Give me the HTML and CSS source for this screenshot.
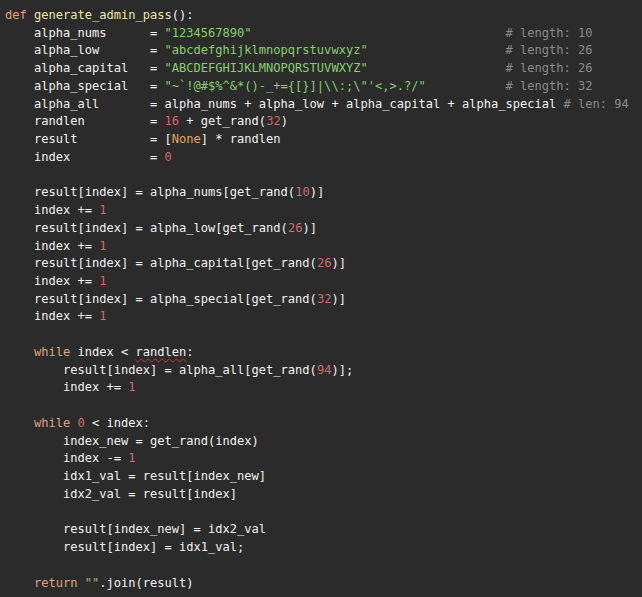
FILE: index.html
```html
<!DOCTYPE html>
<html>
<head>
<meta charset="utf-8">
<link rel="stylesheet" href="styles.css">
</head>
<body>
<pre class="code"><span class="kw">def</span> <span class="fn">generate_admin_pass</span>():
    alpha_nums      = <span class="str">"1234567890"</span>                                   <span class="cm"># length: 10</span>
    alpha_low       = <span class="str">"abcdefghijklmnopqrstuvwxyz"</span>                   <span class="cm"># length: 26</span>
    alpha_capital   = <span class="str">"ABCDEFGHIJKLMNOPQRSTUVWXYZ"</span>                   <span class="cm"># length: 26</span>
    alpha_special   = <span class="str">"~`!@#$%^&amp;*()-_+={[}]|\\:;\"'&lt;,&gt;.?/"</span>           <span class="cm"># length: 32</span>
    alpha_all       = alpha_nums + alpha_low + alpha_capital + alpha_special <span class="cm"># len: 94</span>
    randlen         = <span class="num">16</span> + get_rand(<span class="num">32</span>)
    result          = [<span class="const">None</span>] * randlen
    index           = <span class="num">0</span>

    result[index] = alpha_nums[get_rand(<span class="num">10</span>)]
    index += <span class="num">1</span>
    result[index] = alpha_low[get_rand(<span class="num">26</span>)]
    index += <span class="num">1</span>
    result[index] = alpha_capital[get_rand(<span class="num">26</span>)]
    index += <span class="num">1</span>
    result[index] = alpha_special[get_rand(<span class="num">32</span>)]
    index += <span class="num">1</span>

    <span class="kw">while</span> index &lt; <span class="squig">randlen</span>:
        result[index] = alpha_all[get_rand(<span class="num">94</span>)];
        index += <span class="num">1</span>

    <span class="kw">while</span> <span class="num">0</span> &lt; index:
        index_new = get_rand(index)
        index -= <span class="num">1</span>
        idx1_val = result[index_new]
        idx2_val = result[index]

        result[index_new] = idx2_val
        result[index] = idx1_val;

    <span class="kw">return</span> <span class="str">""</span>.join(result)</pre>
</body>
</html>
```

FILE: styles.css
```css
html, body {
  margin: 0;
  padding: 0;
  background: #2b2b2b;
}
body {
  width: 642px;
  height: 597px;
  overflow: hidden;
}
.code {
  margin: 0;
  padding: 7px 0 0 5px;
  font-family: "DejaVu Sans Mono", "Liberation Mono", monospace;
  font-size: 12.06px;
  line-height: 17.74px;
  color: #f2f2f2;
  white-space: pre;
}
.kw { color: #e0a27a; }
.fn { color: #efe6a4; }
.str { color: #86d06a; }
.num { color: #d06a6a; }
.const { color: #e8a460; }
.cm { color: #8a8a8a; }
.squig {
  text-decoration: underline wavy #d03030;
  text-decoration-thickness: 1px;
  text-underline-offset: 2px;
}
```
